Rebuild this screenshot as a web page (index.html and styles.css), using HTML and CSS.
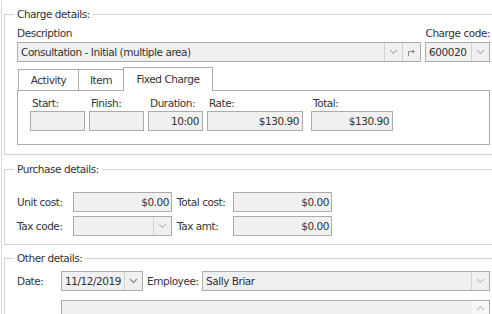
FILE: index.html
```html
<!DOCTYPE html>
<html>
<head>
<meta charset="utf-8">
<link rel="stylesheet" href="styles.css">
</head>
<body>
<div class="window">
  <fieldset class="group g-charge">
    <legend>Charge details:</legend>
    <div class="head-row"><span>Description</span><span>Charge code:</span></div>
    <div class="combo-row">
      <div class="combo desc">
        <span class="val">Consultation - Initial (multiple area)</span>
        <span class="btn"><svg width="9" height="6" viewBox="0 0 9 6"><polyline points="1,1 4.5,4.5 8,1" fill="none" stroke="#b4b4b4" stroke-width="1.2"/></svg></span>
        <span class="btn"><svg width="9" height="8" viewBox="0 0 9 8"><path d="M1.5 8V3.5H6" fill="none" stroke="#8a8a8a" stroke-width="1"/><path d="M5.5 1.5L8 3.5L5.5 5.5Z" fill="#8a8a8a"/></svg></span>
      </div>
      <div class="combo code">
        <span class="val">600020</span>
        <span class="btn"><svg width="9" height="6" viewBox="0 0 9 6"><polyline points="1,1 4.5,4.5 8,1" fill="none" stroke="#b4b4b4" stroke-width="1.2"/></svg></span>
      </div>
    </div>
    <div class="tabs">
      <div class="tab t-activity">Activity</div>
      <div class="tab t-item">Item</div>
      <div class="tab t-fixed active">Fixed Charge</div>
    </div>
    <div class="panel">
      <div class="field f-start"><span class="lbl">Start:</span><div class="box"></div></div>
      <div class="field f-finish"><span class="lbl">Finish:</span><div class="box"></div></div>
      <div class="field f-duration"><span class="lbl">Duration:</span><div class="box">10:00</div></div>
      <div class="field f-rate"><span class="lbl">Rate:</span><div class="box">$130.90</div></div>
      <div class="field f-total"><span class="lbl">Total:</span><div class="box">$130.90</div></div>
    </div>
  </fieldset>

  <fieldset class="group g-purchase">
    <legend>Purchase details:</legend>
    <div class="p-row">
      <span class="p-lbl">Unit cost:</span><div class="box p-box">$0.00</div>
      <span class="p-lbl p-lbl2">Total cost:</span><div class="box p-box">$0.00</div>
    </div>
    <div class="p-row">
      <span class="p-lbl">Tax code:</span>
      <div class="combo p-box"><span class="val"></span><span class="btn"><svg width="9" height="6" viewBox="0 0 9 6"><polyline points="1,1 4.5,4.5 8,1" fill="none" stroke="#c4c4c4" stroke-width="1.2"/></svg></span></div>
      <span class="p-lbl p-lbl2">Tax amt:</span><div class="box p-box">$0.00</div>
    </div>
  </fieldset>

  <fieldset class="group g-other">
    <legend>Other details:</legend>
    <div class="o-row">
      <span class="o-lbl">Date:</span>
      <div class="combo date"><span class="val">11/12/2019</span><span class="btn"><svg width="9" height="6" viewBox="0 0 9 6"><polyline points="1,1 4.5,4.5 8,1" fill="none" stroke="#909090" stroke-width="1.3"/></svg></span></div>
      <span class="o-lbl2">Employee:</span>
      <div class="combo emp"><span class="val">Sally Briar</span><span class="btn"><svg width="9" height="6" viewBox="0 0 9 6"><polyline points="1,1 4.5,4.5 8,1" fill="none" stroke="#c4c4c4" stroke-width="1.2"/></svg></span></div>
    </div>
    <div class="memo">
      <div class="scroll"><svg width="9" height="6" viewBox="0 0 9 6"><polyline points="1,5 4.5,1.5 8,5" fill="none" stroke="#c4c4c4" stroke-width="1.2"/></svg></div>
    </div>
  </fieldset>
</div>
</body>
</html>
```

FILE: styles.css
```css
html, body {
  margin: 0;
  padding: 0;
  background: #ffffff;
}
body {
  font-family: "DejaVu Sans", sans-serif;
  font-size: 10.5px;
  letter-spacing: -0.45px;
  color: #333333;
}
.window {
  margin-left: 1px;
  border-left: 1px solid #d9d9d9;
  height: 314px;
  box-sizing: border-box;
  padding-top: 9px;
  overflow: hidden;
}
.group {
  margin: 0 0 0 2px;
  border: 1px solid #d5d5d5;
  border-right: none;
  padding: 7px 2px 9px 12px;
  min-width: 0;
}
.group legend {
  margin-left: -3px;
  padding: 0 3px;
  line-height: 11px;
  height: 11px;
}
.g-purchase { margin-top: 9px; padding-top: 17px; padding-bottom: 8px; }
.g-other { margin-top: 8px; padding-top: 7px; padding-bottom: 0; height: 70px; }

.head-row {
  display: flex;
  justify-content: space-between;
  line-height: 12px;
  height: 12px;
}
.combo-row {
  display: flex;
  gap: 4px;
  margin-top: 3px;
}
.combo, .box {
  height: 20px;
  box-sizing: border-box;
  border: 1px solid #ababab;
  background: #f0f0f0;
  line-height: 18px;
  white-space: nowrap;
}
.combo {
  display: flex;
}
.combo .val {
  flex: 1;
  padding-left: 3px;
  overflow: hidden;
}
.combo .btn {
  width: 17px;
  border-left: 1px solid #d2d2d2;
  display: flex;
  align-items: center;
  justify-content: center;
}
.desc { flex: 1; }
.code { width: 65px; }

.tabs {
  display: flex;
  align-items: flex-end;
  height: 23px;
  margin-top: 5px;
  padding-left: 1px;
  position: relative;
  z-index: 1;
}
.tab {
  height: 21px;
  box-sizing: border-box;
  border: 1px solid #acacac;
  border-bottom: none;
  background: #ffffff;
  text-align: center;
  line-height: 20px;
}
.t-activity { width: 61px; }
.t-item { width: 46px; margin-left: -1px; }
.t-fixed { width: 90px; margin-left: -1px; }
.tab.active {
  height: 24px;
  margin-bottom: -1px;
  line-height: 22px;
}
.panel {
  height: 55px;
  box-sizing: border-box;
  border: 1px solid #acacac;
  padding: 6px 0 0 12px;
  display: flex;
  gap: 4px;
}
.field .lbl {
  display: block;
  line-height: 12px;
  height: 12px;
  padding-left: 2px;
  margin-bottom: 2px;
}
.field .box {
  text-align: right;
  padding-right: 3px;
}
.f-start .box, .f-finish .box, .f-duration .box { width: 55px; }
.f-rate .box { width: 96px; }
.f-total { margin-left: 4px; }
.f-total .box { width: 82px; }

.p-row {
  display: flex;
  align-items: center;
}
.p-row + .p-row { margin-top: 4px; }
.p-lbl { width: 56px; }
.p-lbl2 { margin-left: 5px; }
.p-box { width: 99px; }
.box.p-box { text-align: right; padding-right: 2px; }

.o-row {
  display: flex;
  align-items: center;
}
.o-lbl { width: 44px; }
.date { width: 82px; }
.o-lbl2 { width: 55px; margin-left: 4px; }
.emp { flex: 1; }
.memo {
  margin: 9px 0 0 44px;
  height: 40px;
  box-sizing: border-box;
  border: 1px solid #ababab;
  background: #f0f0f0;
  display: flex;
  justify-content: flex-end;
}
.scroll {
  width: 17px;
  background: #f7f7f7;
  display: flex;
  justify-content: center;
  padding-top: 4px;
}
```
